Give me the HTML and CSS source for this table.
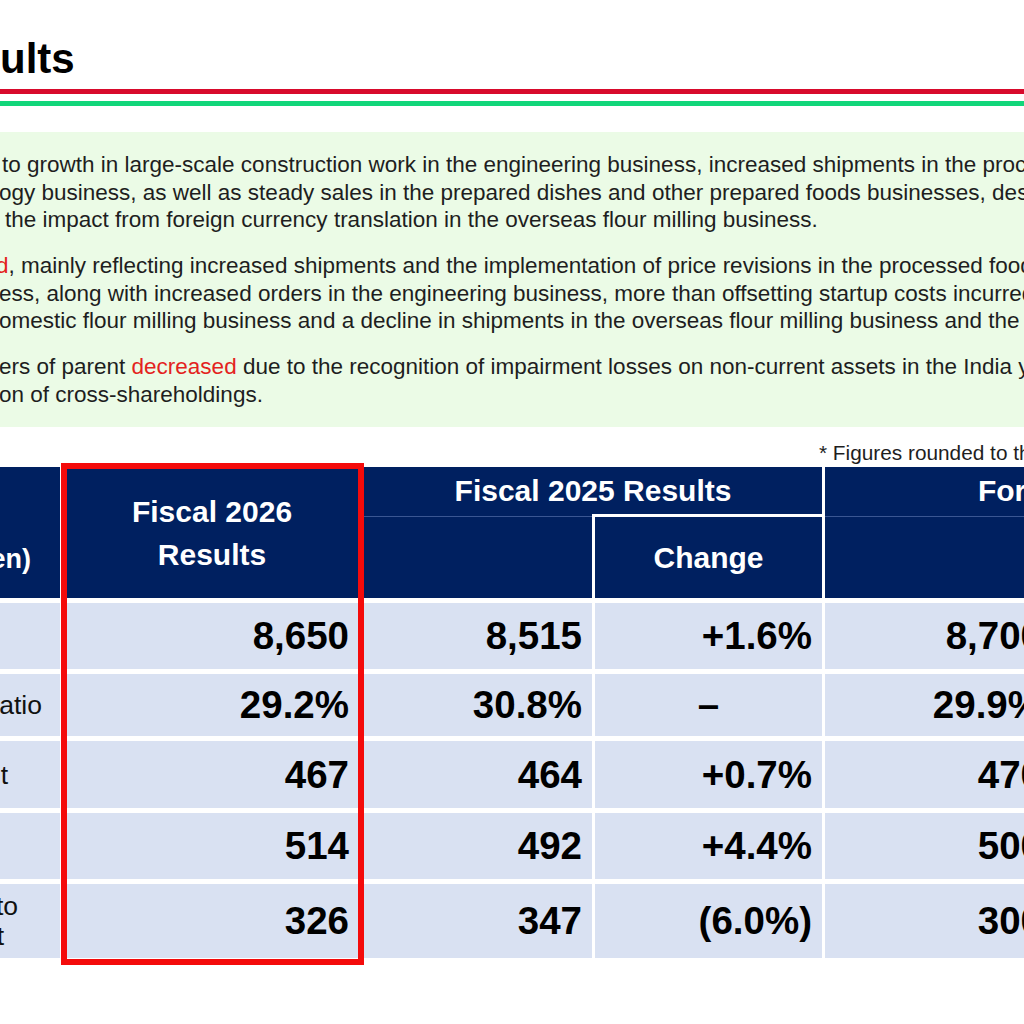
FILE: index.html
```html
<!DOCTYPE html>
<html lang="en">
<head>
<meta charset="utf-8">
<title>Results</title>
<link rel="stylesheet" href="styles.css">
</head>
<body>
<div class="slide">
  <h1 class="title">ults</h1>
  <div class="rule rule-red"></div>
  <div class="rule rule-green"></div>

  <div class="summary">
    <p class="para">
      <span class="ln ln1">to growth in large-scale construction work in the engineering business, increased shipments in the processed</span>
      <span class="ln ln2">ogy business, as well as steady sales in the prepared dishes and other prepared foods businesses, despite</span>
      <span class="ln ln3">the impact from foreign currency translation in the overseas flour milling business.</span>
    </p>
    <p class="para">
      <span class="ln ln4"><span class="hl">d</span>, mainly reflecting increased shipments and the implementation of price revisions in the processed food</span>
      <span class="ln ln5">ess, along with increased orders in the engineering business, more than offsetting startup costs incurred</span>
      <span class="ln ln6">omestic flour milling business and a decline in shipments in the overseas flour milling business and the</span>
    </p>
    <p class="para">
      <span class="ln ln7">ers of parent <span class="hl">decreased</span> due to the recognition of impairment losses on non-current assets in the India yeast</span>
      <span class="ln ln8">on of cross-shareholdings.</span>
    </p>
  </div>

  <p class="note">* Figures rounded to the nearest 100 million yen</p>

  <div class="table">
    <div class="th th-label"><span class="lab-en">en)</span></div>
    <div class="th th-main">Fiscal 2026<br>Results</div>
    <div class="th th-group th-fy25">
      <div class="grp-title">Fiscal 2025 Results</div>
      <div class="grp-sub">
        <div class="sub-blank"></div>
        <div class="sub-cell">Change</div>
      </div>
    </div>
    <div class="th th-group th-fc">
      <div class="grp-title">Forecast</div>
      <div class="grp-sub">
        <div class="sub-blank sub-blank-fc"></div>
        <div class="sub-cell sub-cell-fc">Change</div>
      </div>
    </div>

    <div class="td td-label"></div>
    <div class="td td-num td-first">8,650</div>
    <div class="td td-num">8,515</div>
    <div class="td td-num">+1.6%</div>
    <div class="td td-num">8,700</div>
    <div class="td td-num"></div>

    <div class="td td-label"><span class="frag frag-ratio">atio</span></div>
    <div class="td td-num td-first">29.2%</div>
    <div class="td td-num">30.8%</div>
    <div class="td td-num td-center">–</div>
    <div class="td td-num">29.9%</div>
    <div class="td td-num"></div>

    <div class="td td-label"><span class="frag frag-op">t</span></div>
    <div class="td td-num td-first">467</div>
    <div class="td td-num">464</div>
    <div class="td td-num">+0.7%</div>
    <div class="td td-num">470</div>
    <div class="td td-num"></div>

    <div class="td td-label"></div>
    <div class="td td-num td-first">514</div>
    <div class="td td-num">492</div>
    <div class="td td-num">+4.4%</div>
    <div class="td td-num">500</div>
    <div class="td td-num"></div>

    <div class="td td-label td-label-2"><span class="frag frag-to">to</span><span class="frag frag-nt">t</span></div>
    <div class="td td-num td-first">326</div>
    <div class="td td-num">347</div>
    <div class="td td-num">(6.0%)</div>
    <div class="td td-num">300</div>
    <div class="td td-num"></div>
  </div>

  <div class="highlight"></div>
</div>
</body>
</html>
```

FILE: styles.css
```css
html, body {
  margin: 0;
  padding: 0;
  background: #ffffff;
}

.slide {
  position: relative;
  width: 1024px;
  height: 1024px;
  overflow: hidden;
  font-family: "Liberation Sans", Arial, sans-serif;
  color: #1c1c1c;
}

.title {
  margin: 0 0 0 0;
  padding-top: 34px;
  font-size: 42px;
  line-height: 49px;
  font-weight: bold;
  color: #000000;
  white-space: nowrap;
}

.rule {
  height: 5px;
}

.rule-red {
  margin-top: 6px;
  background: #d80a2c;
}

.rule-green {
  margin-top: 7px;
  background: #12d67a;
}

.summary {
  margin-top: 26px;
  background: #ebfbe6;
  padding: 19px 0 19px 0;
  font-size: 22.5px;
  line-height: 27.5px;
  color: #1e1e1e;
}

.para {
  margin: 0 0 18.5px 0;
}

.para:last-child {
  margin-bottom: 0;
}

.ln {
  display: block;
  white-space: nowrap;
}

.ln1 { margin-left: 2px; }
.ln2 { margin-left: -1px; }
.ln3 { margin-left: 5px; }
.ln4 { margin-left: -4px; }
.ln5 { margin-left: -1px; }
.ln6 { margin-left: -1px; }
.ln7 { margin-left: -1px; }
.ln8 { margin-left: -1px; }

.hl {
  color: #e3231d;
}

.note {
  margin: 14px 0 3px 0;
  padding-left: 819px;
  font-size: 20.8px;
  line-height: 23px;
  white-space: nowrap;
  color: #1e1e1e;
}

.table {
  display: grid;
  grid-template-columns: 160px 298px 228px 227px 227px 201px;
  grid-template-rows: 131px 66px 62px 67px 66px 74px;
  column-gap: 3px;
  row-gap: 5px;
  margin-left: -100px;
  width: max-content;
}

.th {
  background: #002060;
  color: #ffffff;
  font-weight: bold;
  font-size: 30px;
}

.th-label {
  display: flex;
  flex-direction: column;
  justify-content: flex-end;
  align-items: flex-end;
  padding: 0 29px 24px 0;
  font-size: 27px;
  line-height: 30px;
}

.th-main {
  display: flex;
  align-items: center;
  justify-content: center;
  text-align: center;
  line-height: 43px;
}

.th-fy25 {
  grid-column: 3 / span 2;
}

.th-fc {
  grid-column: 5 / span 2;
}

.th-group {
  display: flex;
  flex-direction: column;
}

.grp-title {
  height: 47px;
  display: flex;
  align-items: center;
  justify-content: center;
  white-space: nowrap;
}

.grp-sub {
  flex: 1;
  display: flex;
}

.sub-blank {
  width: 228px;
  margin-top: 2px;
  border-top: 1px solid #3a5692;
}

.sub-blank-fc {
  width: 227px;
}

.sub-cell {
  flex: 1;
  border-top: 3px solid #ffffff;
  border-left: 3px solid #ffffff;
  display: flex;
  align-items: center;
  justify-content: center;
}

.td {
  background: #d9e1f2;
  display: flex;
  align-items: center;
}

.td-num {
  justify-content: flex-end;
  padding-right: 10px;
  font-size: 38.5px;
  font-weight: bold;
  color: #000000;
  white-space: nowrap;
}

.td-first {
  padding-right: 12px;
}

.td-center {
  justify-content: center;
  padding-right: 0;
}

.td-label {
  flex-direction: column;
  justify-content: center;
  align-items: flex-end;
  font-size: 26.5px;
  line-height: 30px;
  color: #111111;
}

.frag {
  display: block;
  white-space: nowrap;
}

.frag-ratio { margin-right: 18px; }
.frag-op { margin-right: 52px; }
.frag-to { margin-right: 42px; }
.frag-nt { margin-right: 56px; }

.highlight {
  position: absolute;
  left: 61px;
  top: 463px;
  width: 303px;
  height: 502px;
  box-sizing: border-box;
  border: 6px solid #f40b0b;
}
```
